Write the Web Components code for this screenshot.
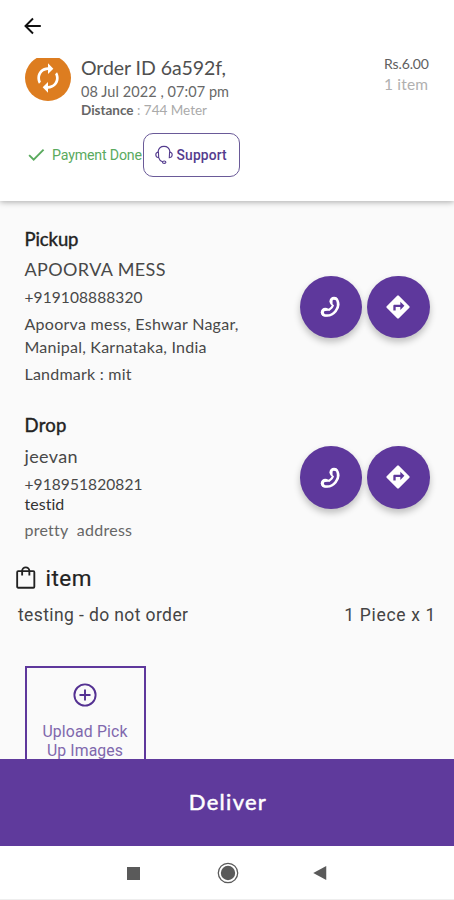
<!DOCTYPE html>
<html lang="en">
<head>
<meta charset="utf-8">
<title>Order</title>
<style>
html,body{margin:0;height:100%;overflow:hidden;background:#fafafa}
</style>
</head>
<body>
<delivery-screen></delivery-screen>
<script>
const define = (name, html, after) => {
  const t = document.createElement('template');
  t.innerHTML = html;
  customElements.define(name, class extends HTMLElement {
    connectedCallback() {
      if (this.shadowRoot) return;
      this.attachShadow({mode: 'open'}).append(t.content.cloneNode(true));
      if (after) after(this, this.shadowRoot);
    }
  });
};

/* One line of text: size, line height (h), tracked to a given width (w). */
define('text-line', `<style>
:host{display:block;white-space:pre;font-family:Lato,"Liberation Sans",sans-serif}
:host([roboto]){font-family:Roboto,"Liberation Sans",sans-serif}
span{display:inline-block}
</style><span><slot></slot></span>`, (el, root) => {
  el.style.fontSize = el.getAttribute('size') + 'px';
  el.style.lineHeight = el.style.height = el.getAttribute('h') + 'px';
  const span = root.querySelector('span'), w = +el.getAttribute('w');
  const n = el.textContent.length;
  if (w) span.style.letterSpacing = ((w - span.getBoundingClientRect().width) / (n - 1)).toFixed(3) + 'px';
  span.style.marginRight = '-2px';
});

const icons = {
  back: ['0 0 24 24', '<path d="M20.5 12H4.5M12 3.8 3.8 12l8.2 8.2" fill="none" stroke="currentColor" stroke-width="2.1"/>'],
  sync: ['0 0 24 24', '<path d="M12 6v3l4-4-4-4v3c-4.42 0-8 3.58-8 8 0 1.57.46 3.03 1.24 4.26L6.7 14.8c-.45-.83-.7-1.79-.7-2.8 0-3.31 2.69-6 6-6zm6.76 1.74L17.3 9.2c.44.84.7 1.79.7 2.8 0 3.31-2.69 6-6 6v-3l-4 4 4 4v-3c4.42 0 8-3.58 8-8 0-1.57-.46-3.03-1.24-4.26z" fill="currentColor"/>'],
  check: ['0 0 18 14', '<path d="M1.2 7.2 6 12 16.5 1.3" fill="none" stroke="currentColor" stroke-width="2"/>'],
  headset: ['0 0 18 20', '<g fill="none" stroke="currentColor" stroke-width="1.1" stroke-linecap="round"><path d="M3 6.8C3.6 3.4 6 1.4 9 1.4s5.4 2 6 5.4"/><path d="M3.4 7C1.7 7.3.8 8.3.8 9.8s1.1 2.7 2.9 2.9zM14.6 7c1.7.3 2.6 1.3 2.6 2.8s-1.1 2.7-2.9 2.9zM3.7 12.7c.5 2 1.9 3.5 3.8 4.1"/><ellipse cx="9.2" cy="17.2" rx="1.7" ry="1.2"/></g>'],
  phone: ['0 0 22 22', '<path d="M15 5C18.500 11 12 18.500 5.300 17" fill="none" stroke="#fff" stroke-width="7.800" stroke-linecap="round"/><circle cx="14.300" cy="5.400" r="4.600" fill="#fff"/><circle cx="5.400" cy="16.600" r="4.600" fill="#fff"/><path d="M15.200 5.500C17.500 11.300 12 18 5.800 17.200" fill="none" stroke="#5e389c" stroke-width="2.900" stroke-linecap="round"/><path d="M14.200 5.200v2.600M5.300 16.600l3.200-.2" stroke="#5e389c" stroke-width="2.700" stroke-linecap="round"/>'],
  directions: ['0 0 24 24', '<path d="M21.710 11.290l-9-9a1 1 0 0 0-1.410 0l-9 9a1 1 0 0 0 0 1.410l9 9c.390.390 1.020.390 1.410 0l9-9a1 1 0 0 0 0-1.410zM14 14.500V12h-4v3H8v-4c0-.550.450-1 1-1h5V7.500l3.500 3.500-3.500 3.500z" fill="currentColor"/>'],
  bag: ['0 0 20 24', '<g fill="none" stroke="currentColor" stroke-width="1.900"><rect x="1.200" y="5" width="17.600" height="17" rx="1"/><path d="M6.300 9.500V4.800a3.700 3.700 0 0 1 7.400 0v4.700"/></g>'],
  plus: ['0 0 24 24', '<g fill="none" stroke="currentColor" stroke-width="1.900"><circle cx="12" cy="12" r="10.600"/><path d="M12 6.500v11M6.500 12h11"/></g>'],
  square: ['0 0 13 13', '<path d="M0 0h13v13H0z" fill="currentColor"/>'],
  home: ['0 0 22 22', '<circle cx="11" cy="11" r="7.200" fill="currentColor"/><circle cx="11" cy="11" r="9.700" fill="none" stroke="currentColor" stroke-width="1.300"/>'],
  left: ['0 0 13 14', '<path d="M13 0v14L0 7z" fill="currentColor"/>']
};
define('ui-icon', `<style>:host{display:block;flex:none}svg{display:block;width:100%;height:100%}</style>`, (el, root) => {
  const [vb, body] = icons[el.getAttribute('name')];
  el.style.width = el.getAttribute('w') + 'px';
  el.style.height = (el.getAttribute('h') || el.getAttribute('w')) + 'px';
  root.innerHTML += `<svg viewBox="${vb}">${body}</svg>`;
});

define('round-button', `<style>
:host{display:grid;place-items:center;width:62.5px;height:62.5px;border-radius:50%;background:#5e389c;color:#fff;box-shadow:0 4px 7px rgba(0,0,0,.24)}
</style><slot></slot>`);

define('contact-actions', `<style>
:host{display:flex;gap:5px;flex:none}
</style>
<round-button><ui-icon name="phone" w="21.5"></ui-icon></round-button>
<round-button><ui-icon name="directions" w="28"></ui-icon></round-button>`);

define('contact-card', `<style>
:host{display:flex;justify-content:space-between;align-items:flex-start;padding:0 24.5px 0 24.5px;color:#484848}
contact-actions{margin-top:var(--actions-top)}
</style><div><slot></slot></div><contact-actions></contact-actions>`);

define('order-header', `<style>
:host{display:block;box-sizing:border-box;height:201px;background:#fff;padding-top:15px;box-shadow:0 1px 6px rgba(0,0,0,.33)}
.back{margin-left:22px;color:#111}
.row{display:flex;margin-top:18px;padding:0 25px 0 24.5px;height:64px}
.status{width:46.5px;height:43px;margin-top:3px;overflow:hidden;flex:none}
.disc{width:46.5px;height:46.5px;margin-top:-3.5px;border-radius:50%;background:#dd7d20;color:#fff;display:grid;place-items:center}
.info{flex:1;margin-left:10px;margin-top:1px;color:#505050}
.price{width:45px}
.pay{display:flex;align-items:center;margin-top:14px;padding-left:28px;height:44px;color:#5aaa5e}
.pay text-line{margin-left:7px;width:90px}
.support{box-sizing:border-box;display:flex;align-items:center;width:97px;height:43.5px;border:1.3px solid #6a5a98;border-radius:10px;margin-left:.6px;padding-left:11px;color:#543c8e}
.support text-line{margin-left:4px;font-weight:500;width:50px}
</style>
<ui-icon class="back" name="back" w="22"></ui-icon>
<div class="row">
<div class="status"><div class="disc"><ui-icon name="sync" w="32"></ui-icon></div></div>
<div class="info">
<text-line size="19.5" h="24" w="145">Order ID 6a592f,</text-line>
<text-line size="14.5" h="23" w="148" style="color:#686868">08 Jul 2022 , 07:07 pm</text-line>
<text-line size="13.5" h="14" w="126" style="color:#aaa"><b style="color:#666">Distance</b> : 744 Meter</text-line>
</div>
<div class="price">
<text-line size="14" h="18" w="45" style="color:#606060">Rs.6.00</text-line>
<text-line size="15.5" h="23" w="44" style="color:#b0b0b0">1 item</text-line>
</div>
</div>
<div class="pay"><ui-icon name="check" w="17" h="14"></ui-icon>
<text-line roboto size="14.2" h="20" w="90">Payment Done</text-line>
<div class="support"><ui-icon name="headset" w="18" h="20"></ui-icon><text-line roboto size="13.8" h="20" w="50">Support</text-line></div>
</div>`);

define('upload-box', `<style>
:host{box-sizing:border-box;display:flex;flex-direction:column;align-items:center;width:121px;height:121px;margin:38px 0 0 24.5px;border:2px solid #5e389c;padding-top:15px;color:#543192}
text-line{color:#8068ad;position:relative;left:-1px}
ui-icon{position:relative;left:-.5px}
</style>
<ui-icon name="plus" w="24"></ui-icon>
<text-line roboto size="15.8" h="19" w="85" style="margin-top:15px">Upload Pick</text-line>
<text-line roboto size="15.8" h="19" w="76">Up Images</text-line>`);

define('item-list', `<style>
:host{display:block;color:#222}
.h{display:flex;align-items:center;padding-left:16px;height:28px}
.r{display:flex;justify-content:space-between;padding:10px 20px 0 18px;color:#444}
</style>
<div class="h"><ui-icon name="bag" w="19.5" h="24"></ui-icon><text-line roboto size="22.5" h="28" w="46" style="margin-left:10px;-webkit-text-stroke:.2px #222">item</text-line></div>
<div class="r"><text-line roboto size="17.5" h="26" w="170">testing - do not order</text-line><text-line roboto size="17.5" h="26" w="91">1 Piece x 1</text-line></div>`);

define('deliver-bar', `<style>
:host{display:grid;place-items:center;height:87px;background:#5f3a9c;color:#fff;-webkit-text-stroke:.5px #fff}
</style><text-line size="22" h="30" w="77" style="margin-bottom:2px">Deliver</text-line>`);

define('system-nav', `<style>
:host{box-sizing:border-box;display:flex;align-items:center;height:54px;background:#fff;border-bottom:1px solid #eee;color:#5a5a5a;padding:1px 127.5px 0 126.5px;justify-content:space-between}
</style><ui-icon name="square" w="13"></ui-icon><ui-icon name="home" w="22" style="margin-left:2.5px"></ui-icon><ui-icon name="left" w="13.5" h="14"></ui-icon>`);

define('delivery-screen', `<style>
:host{display:flex;flex-direction:column;width:454px;height:900px;background:#fafafa}
order-header,deliver-bar,system-nav{flex:none}
main{flex:1;min-height:0;overflow:hidden}
order-header{position:relative}
.title{color:#222;-webkit-text-stroke:.4px #222}
</style>
<order-header></order-header>
<main>
<contact-card style="--actions-top:48.5px;margin-top:26px;height:186px">
<text-line class="title" size="18.5" h="24" w="54">Pickup</text-line>
<text-line size="18" h="36" w="141">APOORVA MESS</text-line>
<text-line size="15.5" h="21" w="118">+919108888320</text-line>
<text-line size="16" h="32" w="214">Apoorva mess, Eshwar Nagar,</text-line>
<text-line size="16" h="13" w="182">Manipal, Karnataka, India</text-line>
<text-line size="16" h="41" w="107">Landmark : mit</text-line>
</contact-card>
<contact-card style="--actions-top:33px;height:151px">
<text-line class="title" size="18.5" h="24" w="42">Drop</text-line>
<text-line size="18" h="38" w="53">jeevan</text-line>
<text-line size="15.5" h="18" w="118">+918951820821</text-line>
<text-line size="16" h="22" w="40" style="color:#333">testid</text-line>
<text-line size="16" h="30" w="107" style="color:#666">pretty  address</text-line>
</contact-card>
<item-list></item-list>
<upload-box></upload-box>
</main>
<deliver-bar></deliver-bar>
<system-nav></system-nav>`);
</script>
</body>
</html>
